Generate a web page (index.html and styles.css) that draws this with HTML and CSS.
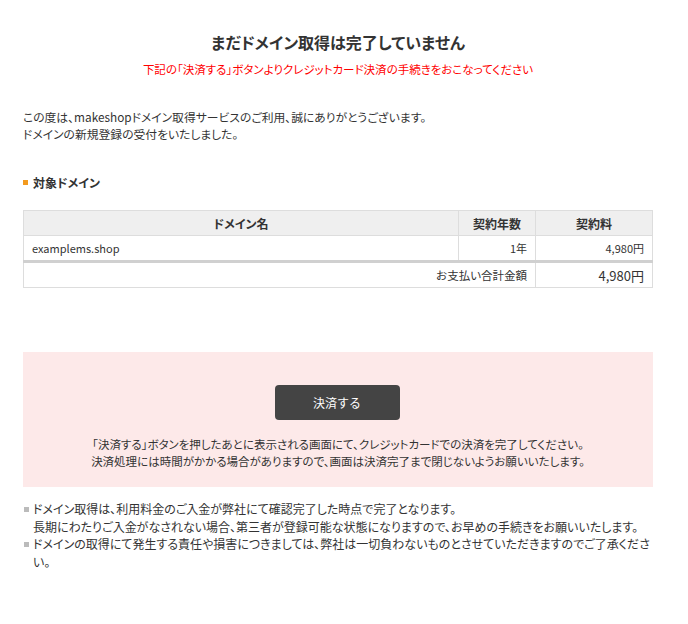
FILE: index.html
```html
<!DOCTYPE html>
<html lang="ja">

<head>
    <meta charset="UTF-8" />
    <title>ドメイン取得</title>
    <link rel="stylesheet" href="styles.css">
</head>

<body>
    <div class="wrap">
        <h1 class="title">まだドメイン取得は完了していません</h1>
        <p class="alert">下記の「決済する」ボタンよりクレジットカード決済の手続きをおこなってください</p>

        <p class="intro">この度は、makeshopドメイン取得サービスのご利用、誠にありがとうございます。<br>ドメインの新規登録の受付をいたしました。</p>

        <h2 class="sub">対象ドメイン</h2>

        <table class="domains">
            <thead>
                <tr>
                    <th>ドメイン名</th>
                    <th class="col-year">契約年数</th>
                    <th class="col-fee">契約料</th>
                </tr>
            </thead>
            <tbody>
                <tr>
                    <td>examplems.shop</td>
                    <td class="num">1年</td>
                    <td class="num">4,980円</td>
                </tr>
                <tr class="total">
                    <td colspan="2" class="num">お支払い合計金額</td>
                    <td class="num big">4,980円</td>
                </tr>
            </tbody>
        </table>

        <div class="pay-box">
            <button class="pay-btn">決済する</button>
            <p>「決済する」ボタンを押したあとに表示される画面にて、クレジットカードでの決済を完了してください。<br>決済処理には時間がかかる場合がありますので、画面は決済完了まで閉じないようお願いいたします。</p>
        </div>

        <ul class="notes">
            <li>ドメイン取得は、利用料金のご入金が弊社にて確認完了した時点で完了となります。<br>長期にわたりご入金がなされない場合、第三者が登録可能な状態になりますので、お早めの手続きをお願いいたします。</li>
            <li>ドメインの取得にて発生する責任や損害につきましては、弊社は一切負わないものとさせていただきますのでご了承ください。</li>
        </ul>
    </div>
</body>

</html>
```

FILE: styles.css
```css
body {
    margin: 0;
    font-family: "Noto Sans CJK JP", "Liberation Sans", sans-serif;
    font-size: 11px;
    color: #333;
    background: #fff;
    font-feature-settings: "palt";
}

.wrap {
    width: 630px;
    margin-left: 23px;
    padding-top: 30px;
}

.title {
    margin: 0;
    font-size: 16px;
    font-weight: bold;
    text-align: center;
    line-height: 24px;
}

.alert {
    margin: 6px 0 0;
    color: #f00;
    font-size: 11.5px;
    text-align: center;
    line-height: 18px;
}

.intro {
    margin: 30px 0 0;
    line-height: 17px;
    font-size: 11.8px;
}

.sub {
    margin: 32px 0 0;
    font-size: 12px;
    font-weight: bold;
    line-height: 18px;
}

.sub::before {
    content: "";
    display: inline-block;
    width: 5px;
    height: 5px;
    background: #f39a1e;
    margin-right: 5px;
    vertical-align: 3px;
}

.domains {
    width: 630px;
    margin-top: 18px;
    border-collapse: collapse;
    font-size: 11px;
}

.domains th,
.domains td {
    border: 1px solid #ddd;
    height: 24px;
    padding: 0 8px;
}

.domains th {
    background: #efefef;
    font-weight: bold;
    font-size: 12px;
}

.domains .col-year {
    width: 60px;
}

.domains .col-fee {
    width: 100px;
}

.domains .num {
    text-align: right;
}

.domains .total td {
    border-top: 3px solid #d0d0d0;
    height: 24px;
    font-size: 11.5px;
}

.domains .total .big {
    font-size: 13px;
}

.pay-box {
    margin-top: 64px;
    background: #fde9e9;
    padding: 33px 0 17px;
    text-align: center;
}

.pay-btn {
    width: 125px;
    height: 35px;
    border: none;
    border-radius: 4px;
    background: #444;
    color: #fff;
    font-family: inherit;
    font-size: 12px;
    margin-left: -2px;
}

.pay-box p {
    margin: 16px 0 0;
    line-height: 17px;
    font-size: 11.5px;
}

.notes {
    list-style: none;
    margin: 13px 0 0;
    padding: 0;
    line-height: 17.5px;
    font-size: 12px;
}

.notes li {
    position: relative;
    padding-left: 10px;
}

.notes li::before {
    content: "";
    position: absolute;
    left: 1px;
    top: 7px;
    width: 5px;
    height: 5px;
    background: #bbb;
}
```
